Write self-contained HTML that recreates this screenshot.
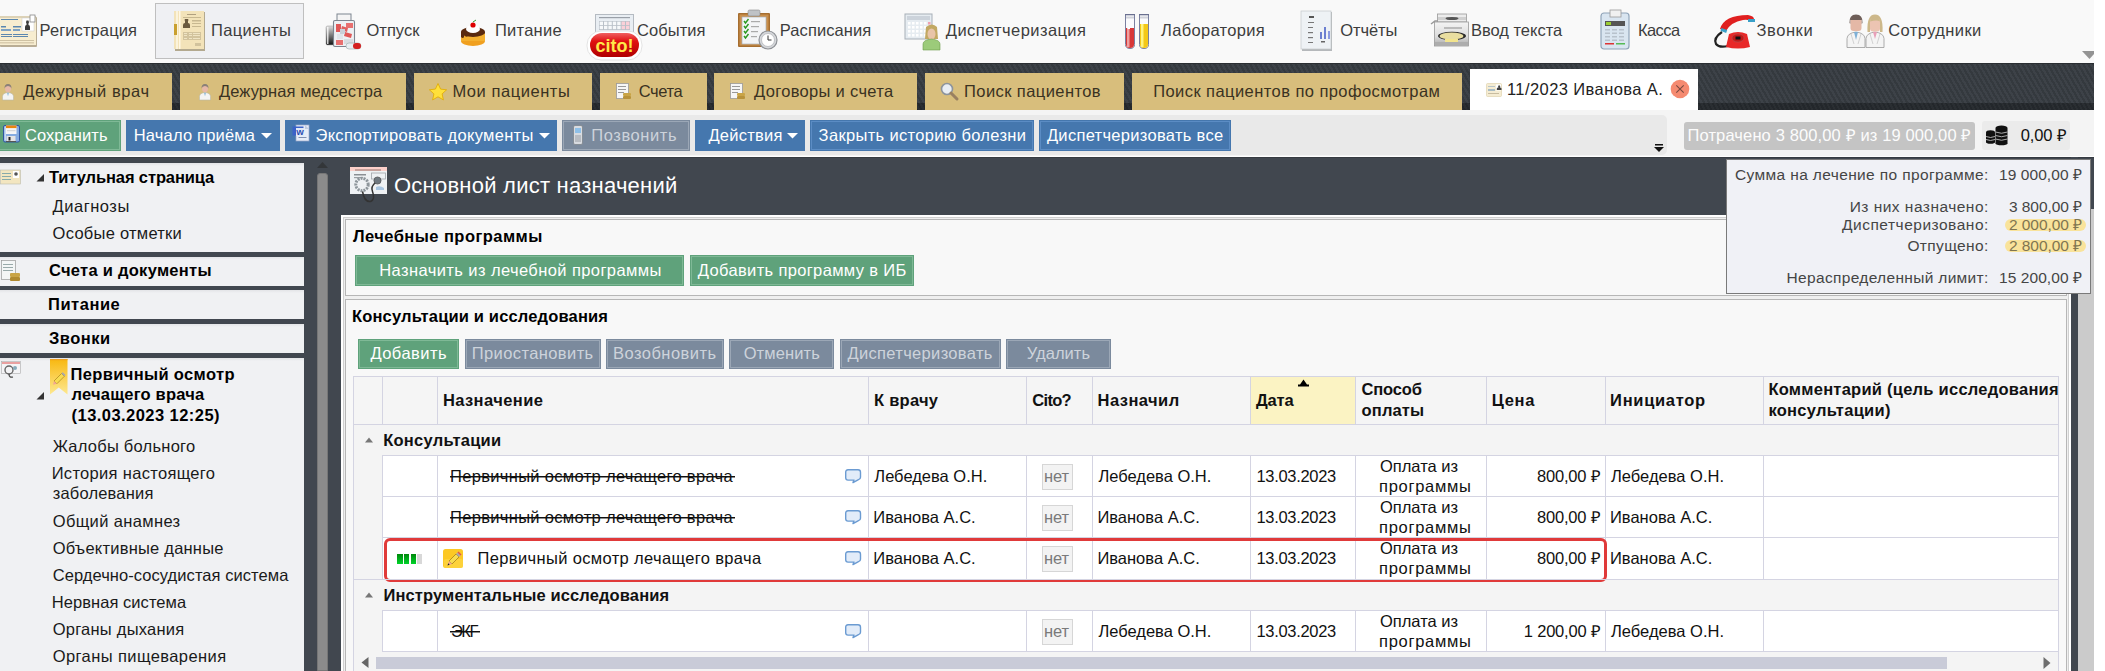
<!DOCTYPE html><html><head><meta charset="utf-8"><style>
*{box-sizing:border-box;margin:0;padding:0}
html,body{width:2105px;height:671px;overflow:hidden;background:#fff;font-family:"Liberation Sans",sans-serif;}
.ab{position:absolute;white-space:nowrap}
.t{position:absolute;white-space:nowrap;line-height:1}
svg.ab{overflow:visible}
</style></head><body>

<div class="ab" style="left:0px;top:0px;width:2094px;height:63px;background:#f9f9f9"></div>
<div class="ab" style="left:155px;top:3px;width:149px;height:56px;background:#eff0f3;border:1px solid #bfbfbf"></div>
<div class="t" style="left:39.50px;top:22.03px;font-size:16.5px;color:#3d3d3d;letter-spacing:0.098px;">Регистрация</div>
<div class="t" style="left:211.00px;top:22.03px;font-size:16.5px;color:#3d3d3d;letter-spacing:0.350px;">Пациенты</div>
<div class="t" style="left:366.40px;top:22.03px;font-size:16.5px;color:#3d3d3d;letter-spacing:0.052px;">Отпуск</div>
<div class="t" style="left:495.00px;top:22.03px;font-size:16.5px;color:#3d3d3d;letter-spacing:0.241px;">Питание</div>
<div class="t" style="left:637.00px;top:22.03px;font-size:16.5px;color:#3d3d3d;letter-spacing:0.071px;">События</div>
<div class="t" style="left:779.80px;top:22.03px;font-size:16.5px;color:#3d3d3d;letter-spacing:0.068px;">Расписания</div>
<div class="t" style="left:945.80px;top:22.03px;font-size:16.5px;color:#3d3d3d;letter-spacing:0.419px;">Диспетчеризация</div>
<div class="t" style="left:1161.00px;top:22.03px;font-size:16.5px;color:#3d3d3d;letter-spacing:0.324px;">Лаборатория</div>
<div class="t" style="left:1340.30px;top:22.03px;font-size:16.5px;color:#3d3d3d;letter-spacing:-0.104px;">Отчёты</div>
<div class="t" style="left:1471.00px;top:22.03px;font-size:16.5px;color:#3d3d3d;letter-spacing:-0.019px;">Ввод текста</div>
<div class="t" style="left:1637.90px;top:22.03px;font-size:16.5px;color:#3d3d3d;letter-spacing:-0.547px;">Касса</div>
<div class="t" style="left:1756.60px;top:22.03px;font-size:16.5px;color:#3d3d3d;letter-spacing:0.549px;">Звонки</div>
<div class="t" style="left:1888.30px;top:22.03px;font-size:16.5px;color:#3d3d3d;letter-spacing:0.394px;">Сотрудники</div>
<svg class="ab" style="left:0px;top:15px" width="37" height="33" viewBox="0 0 37 33"><rect x="0" y="2" width="37" height="30" rx="1" fill="#b9ad95"/>
<rect x="0" y="1" width="36" height="29" fill="#f7edd0"/>
<rect x="0" y="1" width="36" height="2" fill="#ddd2b6"/>
<rect x="1" y="4" width="17" height="1" fill="#5b87b0"/>
<rect x="1" y="11" width="5" height="1.5" fill="#5b87b0"/><rect x="13" y="11" width="8" height="1.5" fill="#5b87b0"/>
<rect x="1" y="14" width="10" height="2" fill="#7ea2c4"/><rect x="13" y="14" width="7" height="2" fill="#7ea2c4"/>
<rect x="1" y="19" width="11" height="1" fill="#5b87b0"/><rect x="13" y="19" width="15" height="1" fill="#5b87b0"/>
<rect x="1" y="21" width="11" height="1" fill="#5b87b0"/><rect x="13" y="21" width="15" height="1" fill="#5b87b0"/>
<rect x="0" y="25" width="34" height="1" fill="#cfc2a3"/><rect x="0" y="27" width="34" height="1.5" fill="#d9ccae"/>
<rect x="22" y="3" width="12" height="13" fill="#fff" stroke="#ccc" stroke-width="0.5"/>
<path d="M25 15 v-3 q0-2 1.5-2 v-1.5 q-1-1 0-3 h2 q1 2 0 3 v1.5 q1.5 0 1.5 2 v3z" fill="#3b3b3b"/>
<rect x="30" y="0" width="5" height="7" fill="#fff" stroke="#888" stroke-width="0.8"/></svg>
<svg class="ab" style="left:174px;top:11px" width="31" height="40" viewBox="0 0 31 40"><rect x="1" y="1" width="30" height="39" fill="#b3a98f"/>
<rect x="0" y="0" width="30" height="38" fill="#f3e3b9"/>
<rect x="2" y="0" width="2" height="38" fill="#fbf3dc"/><rect x="5" y="0" width="1.5" height="38" fill="#fff7e3"/>
<rect x="0" y="13" width="3" height="11" fill="#c9a030"/>
<rect x="13" y="3" width="9" height="1" fill="#b0a080"/>
<rect x="9" y="6" width="18" height="1" fill="#c8b890"/>
<path d="M9 17 v-3 q0-2 2-2 v-2 q-1-1 0-2 h3 q1 1 0 2 v2 q2 0 2 2 v3z" fill="#6b5a3e"/>
<rect x="18" y="9" width="9" height="1.5" fill="#c8b890"/><rect x="18" y="12" width="9" height="1" fill="#c8b890"/><rect x="18" y="15" width="9" height="1" fill="#c8b890"/>
<rect x="9" y="21" width="18" height="8" fill="#d2c39d"/>
<rect x="10" y="22" width="3" height="1" fill="#efe4c4"/><rect x="15" y="22" width="3" height="1" fill="#efe4c4"/><rect x="19" y="22" width="7" height="1" fill="#efe4c4"/>
<rect x="10" y="24" width="3" height="1" fill="#efe4c4"/><rect x="15" y="24" width="3" height="1" fill="#efe4c4"/><rect x="19" y="24" width="7" height="1" fill="#efe4c4"/>
<rect x="10" y="27" width="3" height="1" fill="#efe4c4"/><rect x="15" y="27" width="3" height="1" fill="#efe4c4"/><rect x="19" y="27" width="7" height="1" fill="#efe4c4"/>
<rect x="21" y="32" width="6" height="3" fill="#d2c39d"/></svg>
<svg class="ab" style="left:325px;top:14px" width="37" height="37" viewBox="0 0 37 37"><defs><linearGradient id="can" x1="0" x2="0" y1="0" y2="1"><stop offset="0" stop-color="#ddd"/><stop offset="1" stop-color="#111"/></linearGradient></defs>
<rect x="12" y="0" width="14" height="6.5" fill="#f4f4f4" stroke="#7d8590" stroke-width="1"/>
<rect x="1" y="12" width="8" height="19" rx="1.5" fill="url(#can)" stroke="#aaa" stroke-width="0.6"/>
<rect x="2" y="13" width="1.5" height="17" fill="#fff" opacity="0.8"/>
<rect x="8.5" y="6.5" width="21" height="26" rx="1.5" fill="#eef0f3" stroke="#7d8590" stroke-width="1.1"/>
<path d="M11 10 h5 v8 h-5z" fill="#e05858"/><path d="M17 12 l6 2 -1 4 -6 -2z" fill="#e06060"/>
<path d="M21 9 h7 v5 h-7z" fill="#e87070"/><path d="M12 20 h6 v5 h-6z" fill="#dfe5ea"/>
<path d="M20 18 l7 2 -1 4 -7 -2z" fill="#e05858"/><path d="M11 26 h7 v5 h-7z" fill="#e87070"/>
<path d="M19 25 h9 v5 h-9z" fill="#d9dde2"/><path d="M15 15 h5 v5 h-5z" fill="#c9d0d8"/>
<rect x="21" y="29" width="15" height="6" rx="3" fill="#e8eef2" stroke="#9aa" stroke-width="0.6"/>
<rect x="28" y="29" width="8" height="6" rx="3" fill="#d42020"/></svg>
<svg class="ab" style="left:460px;top:20px" width="26" height="27" viewBox="0 0 26 27"><ellipse cx="13" cy="21" rx="12" ry="5" fill="#f0a020"/>
<rect x="1" y="12" width="24" height="9" fill="#f4b030"/>
<ellipse cx="13" cy="12" rx="12" ry="5" fill="#5a2a10"/>
<path d="M1 12 v5 q2 2 3 0 v-2 q2 3 4 1 v-3 q3 4 5 1 q2 2 4 0 q2 3 4 -1 q2 2 4 0 v-1z" fill="#5a2a10"/>
<ellipse cx="13" cy="9" rx="7" ry="4" fill="#fff"/>
<circle cx="13" cy="5" r="2.6" fill="#d00"/><path d="M13 2 l3 -2" stroke="#393" stroke-width="1"/></svg>
<svg class="ab" style="left:587px;top:14px" width="56" height="47" viewBox="0 0 56 47"><rect x="8.5" y="0.5" width="38" height="19" fill="#e9eef3" stroke="#b5bbc2" stroke-width="1"/>
<rect x="12" y="3" width="31" height="1.2" fill="#9aa0a8"/>
<rect x="12" y="7" width="31" height="9" fill="#b9c0c8"/>
<rect x="12.6" y="7.6" width="3.4" height="3.4" fill="#f6f8fa"/><rect x="12.6" y="11.8" width="3.4" height="3.4" fill="#f6f8fa"/><rect x="17.0" y="7.6" width="3.4" height="3.4" fill="#f6f8fa"/><rect x="17.0" y="11.8" width="3.4" height="3.4" fill="#f6f8fa"/><rect x="21.4" y="7.6" width="3.4" height="3.4" fill="#f6f8fa"/><rect x="21.4" y="11.8" width="3.4" height="3.4" fill="#f6f8fa"/><rect x="25.8" y="7.6" width="3.4" height="3.4" fill="#f6f8fa"/><rect x="25.8" y="11.8" width="3.4" height="3.4" fill="#f6f8fa"/><rect x="30.200000000000003" y="7.6" width="3.4" height="3.4" fill="#f6f8fa"/><rect x="30.200000000000003" y="11.8" width="3.4" height="3.4" fill="#f6f8fa"/><rect x="34.6" y="7.6" width="3.4" height="3.4" fill="#fbd0d8"/><rect x="34.6" y="11.8" width="3.4" height="3.4" fill="#fbd0d8"/><rect x="39.0" y="7.6" width="3.4" height="3.4" fill="#fbd0d8"/><rect x="39.0" y="11.8" width="3.4" height="3.4" fill="#fbd0d8"/>
<rect x="0" y="17" width="55" height="29" rx="14" fill="#fff" stroke="#ddd" stroke-width="0.8"/>
<defs><linearGradient id="citog" x1="0" x2="0" y1="0" y2="1"><stop offset="0" stop-color="#f06060"/><stop offset="0.35" stop-color="#e01010"/><stop offset="1" stop-color="#b00000"/></linearGradient></defs>
<rect x="3" y="19" width="49" height="24" rx="12" fill="url(#citog)"/>
<text x="27.5" y="38" text-anchor="middle" font-family="Liberation Sans" font-weight="bold" font-size="18" fill="#ffe84a">cito!</text></svg>
<svg class="ab" style="left:738px;top:10px" width="40" height="40" viewBox="0 0 40 40"><rect x="0" y="3" width="32" height="34" rx="1" fill="#a66e30"/>
<rect x="1.5" y="4.5" width="29" height="31" fill="#c98f4c"/>
<rect x="4" y="7" width="24" height="27" fill="#f3f4f6" stroke="#a9b2bb" stroke-width="0.7"/>
<rect x="10" y="0" width="12" height="6" rx="1.5" fill="#bfc2c6" stroke="#888" stroke-width="0.6"/>
<path d="M6 11 l1.5 2 3 -4" stroke="#2a9a20" stroke-width="1.4" fill="none"/><rect x="13" y="11" width="9" height="1.2" fill="#aaa"/><path d="M6 16 l1.5 2 3 -4" stroke="#2a9a20" stroke-width="1.4" fill="none"/><rect x="13" y="16" width="8" height="1.2" fill="#aaa"/><path d="M6 21 l1.5 2 3 -4" stroke="#2a9a20" stroke-width="1.4" fill="none"/><rect x="13" y="21" width="7" height="1.2" fill="#aaa"/><path d="M6 26 l1.5 2 3 -4" stroke="#2a9a20" stroke-width="1.4" fill="none"/><rect x="13" y="26" width="6" height="1.2" fill="#aaa"/>
<circle cx="30" cy="30" r="9" fill="#d5d7da" stroke="#8e9196" stroke-width="1.2"/>
<circle cx="30" cy="30" r="6.5" fill="#fff" stroke="#b5b8bc" stroke-width="0.8"/>
<path d="M30 25.5 v4.5 h3.5" stroke="#333" stroke-width="1" fill="none"/></svg>
<svg class="ab" style="left:905px;top:14px" width="38" height="37" viewBox="0 0 38 37"><rect x="0" y="0" width="27" height="25" fill="#e6ecf1" stroke="#a8b0b8" stroke-width="1"/>
<rect x="2" y="2" width="23" height="4" fill="#ccd3db"/>
<rect x="3" y="8" width="2.5" height="2.5" fill="#fff"/><rect x="3" y="12" width="2.5" height="2.5" fill="#fff"/><rect x="3" y="16" width="2.5" height="2.5" fill="#fff"/><rect x="3" y="20" width="2.5" height="2.5" fill="#fff"/><rect x="7" y="8" width="2.5" height="2.5" fill="#fff"/><rect x="7" y="12" width="2.5" height="2.5" fill="#fff"/><rect x="7" y="16" width="2.5" height="2.5" fill="#fff"/><rect x="7" y="20" width="2.5" height="2.5" fill="#fff"/><rect x="11" y="8" width="2.5" height="2.5" fill="#fff"/><rect x="11" y="12" width="2.5" height="2.5" fill="#fff"/><rect x="11" y="16" width="2.5" height="2.5" fill="#fff"/><rect x="11" y="20" width="2.5" height="2.5" fill="#fff"/><rect x="15" y="8" width="2.5" height="2.5" fill="#fff"/><rect x="15" y="12" width="2.5" height="2.5" fill="#fff"/><rect x="15" y="16" width="2.5" height="2.5" fill="#fff"/><rect x="15" y="20" width="2.5" height="2.5" fill="#fff"/><rect x="19" y="8" width="2.5" height="2.5" fill="#fff"/><rect x="19" y="12" width="2.5" height="2.5" fill="#fff"/><rect x="19" y="16" width="2.5" height="2.5" fill="#fff"/><rect x="19" y="20" width="2.5" height="2.5" fill="#fff"/><rect x="23" y="8" width="2.5" height="2.5" fill="#f0a0b0"/><rect x="23" y="12" width="2.5" height="2.5" fill="#f0a0b0"/><rect x="23" y="16" width="2.5" height="2.5" fill="#f0a0b0"/><rect x="23" y="20" width="2.5" height="2.5" fill="#f0a0b0"/>
<path d="M21 13 q6 -5 11 0 l1 12 h-13z" fill="#c2a862"/>
<ellipse cx="26.5" cy="20" rx="4" ry="5.5" fill="#e8c4a8"/>
<path d="M18 36 v-6 q0-4 8.5-5 q8.5 1 8.5 5 v6z" fill="#9ccb7a" stroke="#6c9a4a" stroke-width="0.6"/></svg>
<svg class="ab" style="left:1124px;top:14px" width="26" height="36" viewBox="0 0 26 36"><path d="M1.5 0.5 v30 q0 4 4.5 4 q4.5 0 4.5 -4 v-30" fill="#fbfbfd" stroke="#7a80a0" stroke-width="1"/>
<rect x="1" y="0" width="10" height="1.3" fill="#6a7090"/><rect x="2" y="2.5" width="8" height="2" fill="#d0d2da"/>
<path d="M2 14 h8 v16.5 q0 3.5 -4 3.5 q-4 0 -4 -3.5z" fill="#d83838"/><rect x="3" y="14" width="2.5" height="19" fill="#f0a0a0"/><rect x="3.5" y="13.5" width="2.5" height="1.5" fill="#fff"/>
<path d="M15.5 0.5 v30 q0 4 4.5 4 q4.5 0 4.5 -4 v-30" fill="#fbfbfd" stroke="#7a80a0" stroke-width="1"/>
<rect x="15" y="0" width="10" height="1.3" fill="#6a7090"/><rect x="16" y="2.5" width="8" height="2" fill="#d0d2da"/>
<path d="M16 10 h8 v20.5 q0 3.5 -4 3.5 q-4 0 -4 -3.5z" fill="#f4c818"/><rect x="17" y="10" width="2.5" height="23" fill="#fff480"/></svg>
<svg class="ab" style="left:1301px;top:11px" width="31" height="40" viewBox="0 0 31 40"><rect x="1" y="1" width="30" height="39" fill="#b5b8bb"/>
<rect x="0" y="0" width="30" height="38" fill="#eef2f5" stroke="#c4c8cc" stroke-width="0.7"/>
<rect x="8" y="5" width="5" height="2" fill="#555"/>
<rect x="7" y="11" width="6" height="1" fill="#777"/><rect x="7" y="16" width="5" height="1" fill="#777"/>
<rect x="7" y="21" width="5" height="1.2" fill="#777"/><rect x="7" y="26" width="5" height="1.2" fill="#777"/><rect x="7" y="31" width="5" height="1" fill="#777"/>
<rect x="19" y="21" width="2" height="7" fill="#6b7fd0"/><rect x="23" y="16" width="2" height="12" fill="#6b7fd0"/><rect x="27" y="20" width="2" height="8" fill="#8b9be0"/>
<rect x="20" y="30" width="4" height="1.5" fill="#666"/></svg>
<svg class="ab" style="left:1430px;top:13px" width="41" height="34" viewBox="0 0 41 34"><defs><linearGradient id="twb" x1="0" x2="0" y1="0" y2="1"><stop offset="0" stop-color="#f4f4f4"/><stop offset="0.6" stop-color="#dcdcdc"/><stop offset="1" stop-color="#a8a8a8"/></linearGradient></defs>
<rect x="7.5" y="1" width="29" height="8" fill="#ececec" stroke="#9a9a9a" stroke-width="0.8"/>
<rect x="8" y="4" width="28" height="3" fill="#d0d0d0"/>
<ellipse cx="22" cy="5.5" rx="6.5" ry="1.6" fill="#555"/>
<path d="M1 11 l4 -3 h3" stroke="#999" stroke-width="1.5" fill="none"/>
<rect x="4.5" y="9" width="34" height="24" fill="url(#twb)" stroke="#9a9a9a" stroke-width="0.8"/>
<rect x="14" y="14" width="18" height="2" fill="#bbb"/>
<ellipse cx="22" cy="23" rx="14" ry="4.2" fill="#2a2a2a"/>
<ellipse cx="21.5" cy="23" rx="12" ry="3.6" fill="#e9dea0"/>
<rect x="15" y="26" width="13" height="3" fill="#f2e48e"/>
<rect x="5" y="29" width="33" height="4" fill="#adadad"/></svg>
<svg class="ab" style="left:1601px;top:10px" width="29" height="40" viewBox="0 0 29 40"><rect x="0" y="3" width="28" height="36" rx="3" fill="#d9e5f0" stroke="#8fa3b8" stroke-width="1.2"/>
<rect x="9" y="0" width="11" height="7" fill="#f0f0f0" stroke="#999" stroke-width="0.8"/>
<rect x="4" y="11" width="20" height="5" fill="#555"/><rect x="5" y="12" width="5" height="3" fill="#9acd32"/>
<rect x="4" y="19.0" width="5" height="1.5" fill="#b8c2cc"/><rect x="4" y="22.5" width="5" height="1.5" fill="#b8c2cc"/><rect x="4" y="26.0" width="5" height="1.5" fill="#b8c2cc"/><rect x="4" y="29.5" width="5" height="1.5" fill="#b8c2cc"/><rect x="11" y="19.0" width="5" height="1.5" fill="#b8c2cc"/><rect x="11" y="22.5" width="5" height="1.5" fill="#b8c2cc"/><rect x="11" y="26.0" width="5" height="1.5" fill="#b8c2cc"/><rect x="11" y="29.5" width="5" height="1.5" fill="#b8c2cc"/><rect x="18" y="19.0" width="5" height="1.5" fill="#b8c2cc"/><rect x="18" y="22.5" width="5" height="1.5" fill="#b8c2cc"/><rect x="18" y="26.0" width="5" height="1.5" fill="#b8c2cc"/><rect x="18" y="29.5" width="5" height="1.5" fill="#b8c2cc"/>
<rect x="4" y="33" width="9" height="1.5" fill="#d33"/><rect x="15" y="33" width="9" height="1.5" fill="#5b5"/></svg>
<svg class="ab" style="left:1714px;top:14px" width="42" height="34" viewBox="0 0 42 34"><path d="M8 18 q-9 6 -6 12 q3 4 12 2" stroke="#222" stroke-width="2.2" fill="none"/>
<path d="M6 15 q4 -14 28 -14 q6 1 6 4 l-1 3 q-4 -3 -10 -2 q-12 2 -17 11z" fill="#e02020"/>
<rect x="34" y="5" width="7" height="3" fill="#3aa0c8"/><rect x="7" y="15" width="6" height="3" fill="#3aa0c8" transform="rotate(20 10 16)"/>
<path d="M12 33 l3 -13 q9 -4 18 0 l3 13 q-12 3 -24 0z" fill="#e82828"/>
<ellipse cx="24" cy="24" rx="6" ry="4" fill="#c21818" stroke="#a55" stroke-width="0.6"/>
<rect x="21.5" y="22.5" width="5" height="3" fill="#111"/></svg>
<svg class="ab" style="left:1846px;top:14px" width="39" height="34" viewBox="0 0 39 34"><path d="M1 33.5 v-9 q0.5 -5.5 9 -6.5 q8.5 1 9 6.5 v9z" fill="#f4f4f4" stroke="#9a9a9a" stroke-width="0.8"/>
<path d="M8 18 l2 8 l2 -8z" fill="#7fb0d6"/><path d="M5 20 l3 10 M15 20 l-3 10" stroke="#c8c8c8" stroke-width="0.8"/>
<path d="M3.5 9 q-0.5 -8.5 6.5 -8.5 q7 0 6.5 8.5 l-1 1 v-4 h-11 v4z" fill="#6e5e58"/>
<rect x="4.5" y="4" width="11" height="13" rx="3" fill="#e4b8a6"/><path d="M4.5 6 q0 -3 5.5 -3 q5.5 0 5.5 3 h-11z" fill="#6e5e58"/>
<path d="M20 33.5 v-9 q0.5 -5.5 9 -6.5 q8.5 1 9 6.5 v9z" fill="#f4f4f4" stroke="#9a9a9a" stroke-width="0.8"/>
<path d="M27 18 l2 7 l2 -7z" fill="#e8a0b8"/><path d="M24 20 l3 10 M34 20 l-3 10" stroke="#c8c8c8" stroke-width="0.8"/>
<path d="M21.5 18 q-1 -17.5 7.5 -17.5 q8.5 0 7.5 17.5 h-2.5 v-12 h-10 v12z" fill="#cdb88a"/>
<rect x="24" y="4.5" width="10" height="13" rx="3" fill="#ecc4b2"/><path d="M24 7.5 q0 -4 5 -4 q5 0 5 4 q-3 -2 -10 0z" fill="#cdb88a"/></svg>
<svg class="ab" style="left:2082px;top:51px" width="12" height="8"><path d="M0 0 h12 v3 l-4.5 5z" fill="#949494"/></svg>
<div class="ab" style="left:0px;top:63px;width:2094px;height:47px;background:repeating-linear-gradient(60deg,#34393e 0 2.2px,#3d4248 2.2px 4.4px)"></div>
<div class="ab" style="left:0px;top:63px;width:2094px;height:1px;background:#2a2e32"></div>
<div class="ab" style="left:0px;top:103px;width:2094px;height:7px;background:repeating-linear-gradient(63deg,#23272b 0 2px,#2a2e32 2px 4px)"></div>
<div class="ab" style="left:0px;top:73px;width:172px;height:37px;background:#d8be7c"></div>
<div class="t" style="left:23.30px;top:82.73px;font-size:16.5px;color:#3a3222;letter-spacing:0.587px;">Дежурный врач</div>
<div class="ab" style="left:180px;top:73px;width:226px;height:37px;background:#d8be7c"></div>
<div class="t" style="left:219.00px;top:82.73px;font-size:16.5px;color:#3a3222;letter-spacing:0.080px;">Дежурная медсестра</div>
<div class="ab" style="left:414px;top:73px;width:178px;height:37px;background:#d8be7c"></div>
<div class="t" style="left:452.40px;top:82.73px;font-size:16.5px;color:#3a3222;letter-spacing:0.543px;">Мои пациенты</div>
<div class="ab" style="left:600px;top:73px;width:107px;height:37px;background:#d8be7c"></div>
<div class="t" style="left:638.80px;top:82.73px;font-size:16.5px;color:#3a3222;letter-spacing:-0.407px;">Счета</div>
<div class="ab" style="left:714px;top:73px;width:203px;height:37px;background:#d8be7c"></div>
<div class="t" style="left:754.00px;top:82.73px;font-size:16.5px;color:#3a3222;letter-spacing:0.319px;">Договоры и счета</div>
<div class="ab" style="left:925px;top:73px;width:199px;height:37px;background:#d8be7c"></div>
<div class="t" style="left:964.00px;top:82.73px;font-size:16.5px;color:#3a3222;letter-spacing:0.420px;">Поиск пациентов</div>
<div class="ab" style="left:1132px;top:73px;width:330px;height:37px;background:#d8be7c"></div>
<div class="t" style="left:1153.20px;top:82.73px;font-size:16.5px;color:#3a3222;letter-spacing:0.433px;">Поиск пациентов по профосмотрам</div>
<svg class="ab" style="left:0px;top:83px" width="16" height="18" viewBox="0 0 16 18"><path d="M2.5 17 v-3.5 q0 -3.5 5.5 -4 q5.5 0.5 5.5 4 v3.5z" fill="#f4f4f4" stroke="#b8b8a8" stroke-width="0.6"/>
<path d="M7 9.8 l1 3.5 l1 -3.5z" fill="#8ab8d8"/>
<ellipse cx="8" cy="5.6" rx="3" ry="3.6" fill="#e6b8a8"/><path d="M4.6 5.5 q-0.4 -4.5 3.4 -4.5 q3.8 0 3.4 4.5 q-0.5 -2.5 -3.4 -2.5 q-2.9 0 -3.4 2.5z" fill="#8a8078"/></svg>
<svg class="ab" style="left:197px;top:83px" width="16" height="18" viewBox="0 0 16 18"><path d="M2.5 17 v-3.5 q0 -3.5 5.5 -4 q5.5 0.5 5.5 4 v3.5z" fill="#f4f4f4" stroke="#b8b8a8" stroke-width="0.6"/>
<path d="M7 9.8 l1 3.5 l1 -3.5z" fill="#8ab8d8"/>
<ellipse cx="8" cy="5.6" rx="3" ry="3.6" fill="#e6b8a8"/><path d="M4.6 5.5 q-0.4 -4.5 3.4 -4.5 q3.8 0 3.4 4.5 q-0.5 -2.5 -3.4 -2.5 q-2.9 0 -3.4 2.5z" fill="#8a8078"/></svg>
<svg class="ab" style="left:429px;top:83px" width="18" height="18" viewBox="0 0 18 18"><path d="M9 0.5 l2.6 5.6 6 .7 -4.5 4.1 1.3 6 -5.4 -3.1 -5.4 3.1 1.3 -6 -4.5 -4.1 6 -.7z" fill="#ffe03a" stroke="#e0a800" stroke-width="0.8"/></svg>
<svg class="ab" style="left:616px;top:83px" width="16" height="17" viewBox="0 0 16 17"><rect x="0.5" y="0.5" width="12" height="15" fill="#f6f6f6" stroke="#9a9a9a" stroke-width="0.8"/>
<rect x="2" y="3" width="8" height="1" fill="#999"/><rect x="2" y="6" width="8" height="1" fill="#999"/><rect x="2" y="9" width="6" height="1" fill="#999"/>
<rect x="7" y="10" width="8" height="3" rx="1" fill="#c9a446"/><rect x="7" y="13" width="8" height="3" rx="1" fill="#b8923a"/></svg>
<svg class="ab" style="left:730px;top:83px" width="16" height="17" viewBox="0 0 16 17"><rect x="0.5" y="0.5" width="12" height="15" fill="#f6f6f6" stroke="#9a9a9a" stroke-width="0.8"/>
<rect x="2" y="3" width="8" height="1" fill="#999"/><rect x="2" y="6" width="8" height="1" fill="#999"/><rect x="2" y="9" width="6" height="1" fill="#999"/>
<rect x="7" y="10" width="8" height="3" rx="1" fill="#c9a446"/><rect x="7" y="13" width="8" height="3" rx="1" fill="#b8923a"/></svg>
<svg class="ab" style="left:940px;top:82px" width="19" height="19" viewBox="0 0 19 19"><circle cx="7" cy="7" r="5.5" fill="#e9eef4" stroke="#8d949c" stroke-width="1.6"/>
<path d="M11 11 l6 6" stroke="#9a8060" stroke-width="3" stroke-linecap="round"/></svg>
<div class="ab" style="left:1470px;top:69px;width:228px;height:41px;background:#fff"></div>
<svg class="ab" style="left:1486px;top:83px" width="16" height="14" viewBox="0 0 16 14"><rect x="0.5" y="0.5" width="15" height="13" rx="1" fill="#f5ecd2" stroke="#e0d4b0" stroke-width="0.7"/>
<rect x="2" y="3" width="7" height="1" fill="#b8c4c8"/><rect x="2" y="6" width="7" height="2" fill="#a8bcc4"/><rect x="2" y="10" width="11" height="1" fill="#c8bca0"/>
<rect x="10" y="1.5" width="5" height="6" fill="#fff"/><path d="M10.8 7 v-1.5 q0-1 1.7-1 q-1-0.5 0-2 q1 -0.5 1.6 0.5 q0.5 1 -0.3 1.5 q1.7 0 1.7 1 v1.5z" fill="#444"/></svg>
<div class="t" style="left:1507.00px;top:80.83px;font-size:16.5px;color:#222;letter-spacing:0.414px;">11/2023 Иванова А.</div>
<svg class="ab" style="left:1670px;top:79px" width="20" height="20"><circle cx="10" cy="10" r="9.3" fill="#f58a70"/><path d="M6.3 6.3 l7.4 7.4 M13.7 6.3 l-7.4 7.4" stroke="#7a4a40" stroke-width="1.1"/></svg>
<div class="ab" style="left:0px;top:110px;width:2094px;height:47px;background:#f4f4f4"></div>
<div class="ab" style="left:0px;top:115px;width:1667px;height:40px;background:#e9e9e9;border-radius:0 5px 5px 0"></div>
<div class="ab" style="left:-3px;top:120px;width:124px;height:31px;background:#5fa27b;box-shadow:inset 0 0 0 1px #5fa27b,inset 0 0 0 2px #7fb996"></div>
<div class="t" style="left:25.00px;top:127.23px;font-size:16.5px;color:#fff;letter-spacing:0.063px;">Сохранить</div>
<div class="ab" style="left:126px;top:120px;width:154px;height:31px;background:#4577ae"></div>
<div class="t" style="left:133.70px;top:127.23px;font-size:16.5px;color:#fff;letter-spacing:0.181px;">Начало приёма</div>
<div class="ab" style="left:285px;top:120px;width:272px;height:31px;background:#4577ae"></div>
<div class="t" style="left:315.50px;top:127.23px;font-size:16.5px;color:#fff;letter-spacing:0.293px;">Экспортировать документы</div>
<div class="ab" style="left:562px;top:120px;width:128px;height:31px;background:#7b8a9d;box-shadow:inset 0 0 0 1px #7b8a9d,inset 0 0 0 2px #9ba7b6"></div>
<div class="t" style="left:591.30px;top:127.23px;font-size:16.5px;color:#cdd3db;letter-spacing:0.580px;">Позвонить</div>
<div class="ab" style="left:695px;top:120px;width:110px;height:31px;background:#4577ae"></div>
<div class="t" style="left:708.40px;top:127.23px;font-size:16.5px;color:#fff;letter-spacing:0.249px;">Действия</div>
<div class="ab" style="left:810px;top:120px;width:224px;height:31px;background:#4577ae;box-shadow:inset 0 0 0 1px #4577ae,inset 0 0 0 2px #5b8cc4"></div>
<div class="t" style="left:818.60px;top:127.23px;font-size:16.5px;color:#fff;letter-spacing:0.332px;">Закрыть историю болезни</div>
<div class="ab" style="left:1039px;top:120px;width:192px;height:31px;background:#4577ae;box-shadow:inset 0 0 0 1px #4577ae,inset 0 0 0 2px #5b8cc4"></div>
<div class="t" style="left:1046.90px;top:127.23px;font-size:16.5px;color:#fff;letter-spacing:0.298px;">Диспетчеризовать все</div>
<svg class="ab" style="left:260.8px;top:133px" width="11" height="6"><path d="M0 0 h11 l-5.5 5.5z" fill="#fff"/></svg>
<svg class="ab" style="left:539.4px;top:133px" width="11" height="6"><path d="M0 0 h11 l-5.5 5.5z" fill="#fff"/></svg>
<svg class="ab" style="left:787px;top:133px" width="11" height="6"><path d="M0 0 h11 l-5.5 5.5z" fill="#fff"/></svg>
<svg class="ab" style="left:3px;top:125px" width="17" height="18" viewBox="0 0 17 18"><rect x="0.5" y="0.5" width="16" height="16.5" rx="1.5" fill="#86ace0" stroke="#2f56a0" stroke-width="1"/>
<rect x="1.5" y="1.5" width="1.5" height="14" fill="#c8daf2"/>
<rect x="3" y="0.5" width="10.5" height="8.5" fill="#f6f6f6"/><rect x="3" y="0.5" width="10.5" height="2.6" fill="#e8860f"/>
<rect x="4" y="5" width="8.5" height="1.2" fill="#d8d8d8"/>
<rect x="3.5" y="11" width="9" height="6" fill="#e4e4e4"/><rect x="5.5" y="12" width="2" height="3.5" fill="#222"/>
<rect x="3" y="16" width="10" height="1" fill="#555"/></svg>
<svg class="ab" style="left:292px;top:124px" width="18" height="18" viewBox="0 0 18 18"><rect x="4" y="1" width="13" height="16" fill="#e6ecf8" stroke="#9aa8c8" stroke-width="0.7"/>
<path d="M13 1 l4 4 h-4z" fill="#c0cce0"/>
<rect x="6.5" y="13" width="8" height="1" fill="#8090b0"/>
<rect x="0.5" y="2.5" width="11" height="9" fill="#3a62c8"/>
<rect x="4" y="4" width="8" height="8" fill="#dfe8f6"/>
<text x="8" y="11" text-anchor="middle" font-family="Liberation Sans" font-weight="bold" font-size="8" fill="#2848b0">W</text></svg>
<svg class="ab" style="left:573px;top:125px" width="10" height="20" viewBox="0 0 10 20"><rect x="0.5" y="0.5" width="9" height="19" rx="1.5" fill="#d8dbe0" stroke="#7d848c" stroke-width="0.8"/>
<rect x="2" y="3" width="6" height="5" fill="#8fc0e8"/>
<rect x="2" y="10" width="6" height="7" fill="#b8bcc2"/></svg>
<svg class="ab" style="left:1654px;top:144px" width="10" height="9"><rect x="1" y="0" width="8" height="1.5" fill="#111"/><path d="M0 3 h10 l-5 5z" fill="#111"/></svg>
<div class="ab" style="left:1684px;top:122px;width:291px;height:28px;background:#c4c4c4;border-radius:3px"></div>
<div class="t" style="left:1687.50px;top:126.53px;font-size:16.5px;color:#fcfcfc;letter-spacing:0.126px;">Потрачено 3 800,00 ₽ из 19 000,00 ₽</div>
<div class="ab" style="left:1982px;top:121px;width:88px;height:29px;background:#ebebeb;border-radius:3px"></div>
<svg class="ab" style="left:1985px;top:125px" width="23" height="20"><g fill="#111"><rect x="1" y="7.5" width="9" height="10" rx="1"/><ellipse cx="5.5" cy="7.5" rx="4.5" ry="2.2"/><ellipse cx="5.5" cy="17" rx="4.5" ry="1.8"/><rect x="10.5" y="3" width="12" height="16" rx="1"/><ellipse cx="16.5" cy="3" rx="6" ry="2.6"/><ellipse cx="16.5" cy="18.5" rx="6" ry="1.8"/></g><g stroke="#bbb" stroke-width="0.9" fill="none"><path d="M1 11.5 q4.5 2 9 0 M1 14.5 q4.5 2 9 0 M10.5 7 q6 2.5 12 0 M10.5 10.5 q6 2.5 12 0 M10.5 14 q6 2.5 12 0"/></g></svg>
<div class="t" style="left:2020.70px;top:126.53px;font-size:16.5px;color:#111;letter-spacing:-0.140px;">0,00 ₽</div>
<div class="ab" style="left:0px;top:157px;width:2094px;height:514px;background:#41474f"></div>
<div class="ab" style="left:0px;top:156px;width:2094px;height:1px;background:#fff"></div>
<div class="ab" style="left:0px;top:157px;width:2094px;height:1px;background:#363b41"></div>
<div class="ab" style="left:0px;top:163px;width:304px;height:89px;background:linear-gradient(#e3e4e7,#f0f1f3 3px)"></div>
<div class="ab" style="left:0px;top:257px;width:304px;height:29px;background:linear-gradient(#e3e4e7,#f0f1f3 3px)"></div>
<div class="ab" style="left:0px;top:290px;width:304px;height:29px;background:linear-gradient(#e3e4e7,#f0f1f3 3px)"></div>
<div class="ab" style="left:0px;top:324px;width:304px;height:29px;background:linear-gradient(#e3e4e7,#f0f1f3 3px)"></div>
<div class="ab" style="left:0px;top:358px;width:304px;height:313px;background:linear-gradient(#e3e4e7,#f0f1f3 3px)"></div>
<div class="t" style="left:49.00px;top:169.03px;font-size:16.5px;color:#000;font-weight:bold;letter-spacing:-0.117px;">Титульная страница</div>
<div class="t" style="left:49.00px;top:261.83px;font-size:16.5px;color:#000;font-weight:bold;letter-spacing:0.275px;">Счета и документы</div>
<div class="t" style="left:48.00px;top:295.73px;font-size:16.5px;color:#000;font-weight:bold;letter-spacing:0.538px;">Питание</div>
<div class="t" style="left:49.00px;top:329.53px;font-size:16.5px;color:#000;font-weight:bold;letter-spacing:0.487px;">Звонки</div>
<div class="t" style="left:70.60px;top:365.73px;font-size:16.5px;color:#000;font-weight:bold;letter-spacing:0.351px;">Первичный осмотр</div>
<div class="t" style="left:71.60px;top:386.03px;font-size:16.5px;color:#000;font-weight:bold;letter-spacing:0.202px;">лечащего врача</div>
<div class="t" style="left:71.60px;top:407.03px;font-size:16.5px;color:#000;font-weight:bold;letter-spacing:0.444px;">(13.03.2023 12:25)</div>
<div class="t" style="left:52.60px;top:197.73px;font-size:16.5px;color:#1a1a1a;letter-spacing:0.506px;">Диагнозы</div>
<div class="t" style="left:52.60px;top:224.63px;font-size:16.5px;color:#1a1a1a;letter-spacing:0.259px;">Особые отметки</div>
<div class="t" style="left:52.70px;top:437.53px;font-size:16.5px;color:#1a1a1a;letter-spacing:0.242px;">Жалобы больного</div>
<div class="t" style="left:51.70px;top:464.63px;font-size:16.5px;color:#1a1a1a;letter-spacing:0.311px;">История настоящего</div>
<div class="t" style="left:52.70px;top:484.63px;font-size:16.5px;color:#1a1a1a;letter-spacing:0.180px;">заболевания</div>
<div class="t" style="left:52.70px;top:512.63px;font-size:16.5px;color:#1a1a1a;letter-spacing:0.357px;">Общий анамнез</div>
<div class="t" style="left:52.70px;top:539.63px;font-size:16.5px;color:#1a1a1a;letter-spacing:0.224px;">Объективные данные</div>
<div class="t" style="left:52.70px;top:566.93px;font-size:16.5px;color:#1a1a1a;letter-spacing:0.063px;">Сердечно-сосудистая система</div>
<div class="t" style="left:51.70px;top:593.83px;font-size:16.5px;color:#1a1a1a;letter-spacing:0.061px;">Нервная система</div>
<div class="t" style="left:52.70px;top:621.03px;font-size:16.5px;color:#1a1a1a;letter-spacing:0.242px;">Органы дыхания</div>
<div class="t" style="left:52.70px;top:648.03px;font-size:16.5px;color:#1a1a1a;letter-spacing:0.408px;">Органы пищеварения</div>
<svg class="ab" style="left:36px;top:174px" width="9" height="8"><path d="M8 0 v7.5 h-7.5z" fill="#333"/></svg>
<svg class="ab" style="left:36px;top:392px" width="9" height="8"><path d="M8 0 v7.5 h-7.5z" fill="#333"/></svg>
<svg class="ab" style="left:0px;top:169px" width="21" height="16" viewBox="0 0 21 16"><rect x="0.5" y="1" width="20" height="14" fill="#f3e6c0" stroke="#bba" stroke-width="0.6"/><rect x="2" y="4" width="9" height="1" fill="#8aa"/><rect x="2" y="7" width="9" height="1" fill="#8aa"/><rect x="2" y="10" width="9" height="1" fill="#8aa"/><rect x="13" y="2" width="6" height="7" fill="#fff"/><circle cx="16" cy="5" r="1.8" fill="#555"/></svg>
<svg class="ab" style="left:1px;top:260px" width="20" height="22" viewBox="0 0 20 22"><rect x="0.5" y="0.5" width="14" height="19" fill="#f4f6f6" stroke="#999" stroke-width="0.7"/><rect x="2" y="4" width="10" height="1" fill="#9aa"/><rect x="2" y="7" width="10" height="1" fill="#9aa"/><rect x="2" y="10" width="10" height="1" fill="#9aa"/><rect x="9" y="13" width="10" height="4" rx="1" fill="#c9a446"/><rect x="9" y="17" width="10" height="4" rx="1" fill="#b08a30"/></svg>
<svg class="ab" style="left:1px;top:361px" width="20" height="18" viewBox="0 0 20 18"><rect x="0.5" y="0.5" width="19" height="12" fill="#f4f4f6" stroke="#aaa" stroke-width="0.6"/><rect x="1" y="1" width="18" height="2" fill="#e9a0a0"/><circle cx="8" cy="9" r="4" fill="none" stroke="#666" stroke-width="1.4"/><path d="M8 13 q0 4 4 3" stroke="#444" stroke-width="1.2" fill="none"/><circle cx="14" cy="7" r="2" fill="#8ab"/></svg>
<svg class="ab" style="left:50px;top:359px" width="18" height="36" viewBox="0 0 18 36"><defs><linearGradient id="bmk" x1="0" x2="0" y1="0" y2="1"><stop offset="0" stop-color="#f8b810"/><stop offset="1" stop-color="#fde890"/></linearGradient></defs><path d="M0 0 h17.5 v35.5 l-8.75 -7 l-8.75 7z" fill="url(#bmk)"/><rect x="0" y="0" width="17.5" height="1.2" fill="#f0a020"/><path d="M4 22 l7.5 -7.5 l2.8 2.8 l-7.5 7.5z" fill="#f8dc50" stroke="#9a7410" stroke-width="0.6"/><path d="M11.5 14.5 l1.3 -1.3 l2.8 2.8 l-1.3 1.3z" fill="#a8a8b0"/><path d="M4 22 l2.8 2.8 l-3.8 1z" fill="#f2a894"/></svg>
<div class="ab" style="left:317px;top:173px;width:11px;height:498px;background:#8b8b8b;border:1px solid #767676;border-radius:3px 3px 0 0"></div>
<svg class="ab" style="left:317px;top:162px" width="11" height="7"><path d="M0 6 l5.5 -6 l5.5 6z" fill="#333639"/></svg>
<svg class="ab" style="left:350px;top:167px" width="38" height="37" viewBox="0 0 38 37"><rect x="0" y="0" width="37" height="27" fill="#eef1f4"/><rect x="0" y="0" width="37" height="4" fill="#fcd0ca"/><rect x="5" y="2" width="26" height="2" fill="#c8a29c"/><rect x="4" y="7" width="12" height="1.5" fill="#8a8f94"/><rect x="4" y="10" width="9" height="1.2" fill="#9a9fa4"/><rect x="21.5" y="6" width="14" height="6" fill="none" stroke="#a0a5aa" stroke-width="0.8"/><path d="M26 20 q4 -2 8 1 v2 h-8z" fill="#a9c6e2"/><circle cx="12" cy="17.5" r="6.2" fill="none" stroke="#8d959b" stroke-width="3" stroke-dasharray="2 1"/><path d="M12.5 24.5 q2 11 8 10 q5 -2 2 -10 q-2 -5 3 -9" stroke="#333" stroke-width="1.5" fill="none"/><circle cx="27.5" cy="13.5" r="3.6" fill="#6f7880" stroke="#444" stroke-width="0.6"/></svg>
<div class="t" style="left:394.00px;top:174.88px;font-size:22px;color:#fff;letter-spacing:0.237px;">Основной лист назначений</div>
<div class="ab" style="left:341px;top:215px;width:1730px;height:470px;background:#efefef;border:2px solid #fff;box-shadow:inset 1px 1px 0 #d0d0d0,inset -1px 0 0 #d0d0d0"></div>
<div class="ab" style="left:345px;top:219px;width:1722px;height:77px;background:#f8f8f8;border:1px solid #b6b6b6"></div>
<div class="t" style="left:353.00px;top:228.03px;font-size:16.5px;color:#000;font-weight:bold;letter-spacing:0.450px;">Лечебные программы</div>
<div class="ab" style="left:355px;top:255px;width:329px;height:31px;background:#5fa27b;box-shadow:inset 0 0 0 1px #5fa27b,inset 0 0 0 2px #7fb996"></div>
<div class="t" style="left:379.30px;top:262.33px;font-size:16.5px;color:#fff;letter-spacing:0.405px;">Назначить из лечебной программы</div>
<div class="ab" style="left:690px;top:255px;width:224px;height:31px;background:#5fa27b;box-shadow:inset 0 0 0 1px #5fa27b,inset 0 0 0 2px #7fb996"></div>
<div class="t" style="left:697.80px;top:262.33px;font-size:16.5px;color:#fff;letter-spacing:0.346px;">Добавить программу в ИБ</div>
<div class="ab" style="left:345px;top:299px;width:1722px;height:380px;background:#f8f8f8;border:1px solid #b6b6b6"></div>
<div class="t" style="left:352.00px;top:307.73px;font-size:16.5px;color:#000;font-weight:bold;letter-spacing:0.161px;">Консультации и исследования</div>
<div class="ab" style="left:358px;top:339px;width:101px;height:30px;background:#5fa27b;box-shadow:inset 0 0 0 1px #5fa27b,inset 0 0 0 2px #7fb996"></div>
<div class="t" style="left:370.40px;top:344.93px;font-size:16.5px;color:#fff;letter-spacing:0.468px;">Добавить</div>
<div class="ab" style="left:465px;top:339px;width:136px;height:30px;background:#7b8a9d;box-shadow:inset 0 0 0 1px #7b8a9d,inset 0 0 0 2px #9ba7b6"></div>
<div class="t" style="left:471.80px;top:344.93px;font-size:16.5px;color:#cdd3db;letter-spacing:0.395px;">Приостановить</div>
<div class="ab" style="left:606px;top:339px;width:118px;height:30px;background:#7b8a9d;box-shadow:inset 0 0 0 1px #7b8a9d,inset 0 0 0 2px #9ba7b6"></div>
<div class="t" style="left:613.00px;top:344.93px;font-size:16.5px;color:#cdd3db;letter-spacing:0.467px;">Возобновить</div>
<div class="ab" style="left:729px;top:339px;width:105px;height:30px;background:#7b8a9d;box-shadow:inset 0 0 0 1px #7b8a9d,inset 0 0 0 2px #9ba7b6"></div>
<div class="t" style="left:743.70px;top:344.93px;font-size:16.5px;color:#cdd3db;letter-spacing:0.100px;">Отменить</div>
<div class="ab" style="left:840px;top:339px;width:161px;height:30px;background:#7b8a9d;box-shadow:inset 0 0 0 1px #7b8a9d,inset 0 0 0 2px #9ba7b6"></div>
<div class="t" style="left:847.40px;top:344.93px;font-size:16.5px;color:#cdd3db;letter-spacing:0.331px;">Диспетчеризовать</div>
<div class="ab" style="left:1006px;top:339px;width:105px;height:30px;background:#7b8a9d;box-shadow:inset 0 0 0 1px #7b8a9d,inset 0 0 0 2px #9ba7b6"></div>
<div class="t" style="left:1026.80px;top:344.93px;font-size:16.5px;color:#cdd3db;letter-spacing:0.034px;">Удалить</div>
<div class="ab" style="left:353px;top:376px;width:1706px;height:49px;background:#f5f5f5;border-top:1px solid #d4d4e2;border-bottom:1px solid #d4d4e2"></div>
<div class="ab" style="left:1251px;top:377px;width:104px;height:47px;background:#fbf3c3"></div>
<div class="ab" style="left:353px;top:376px;width:1px;height:49px;background:#d4d4e2"></div>
<div class="ab" style="left:382px;top:376px;width:1px;height:49px;background:#d4d4e2"></div>
<div class="ab" style="left:437px;top:376px;width:1px;height:49px;background:#d4d4e2"></div>
<div class="ab" style="left:868px;top:376px;width:1px;height:49px;background:#d4d4e2"></div>
<div class="ab" style="left:1026px;top:376px;width:1px;height:49px;background:#d4d4e2"></div>
<div class="ab" style="left:1092px;top:376px;width:1px;height:49px;background:#d4d4e2"></div>
<div class="ab" style="left:1250px;top:376px;width:1px;height:49px;background:#d4d4e2"></div>
<div class="ab" style="left:1355px;top:376px;width:1px;height:49px;background:#d4d4e2"></div>
<div class="ab" style="left:1486px;top:376px;width:1px;height:49px;background:#d4d4e2"></div>
<div class="ab" style="left:1605px;top:376px;width:1px;height:49px;background:#d4d4e2"></div>
<div class="ab" style="left:1763px;top:376px;width:1px;height:49px;background:#d4d4e2"></div>
<div class="ab" style="left:2058px;top:376px;width:1px;height:49px;background:#d4d4e2"></div>
<svg class="ab" style="left:1298px;top:379px" width="11" height="8"><path d="M0 7.5 h11 v-2 h-2 l-3.5 -5 l-3.5 5 h-2z" fill="#000"/></svg>
<div class="t" style="left:442.90px;top:392.03px;font-size:16.5px;color:#111;font-weight:bold;letter-spacing:0.412px;">Назначение</div>
<div class="t" style="left:874.00px;top:392.03px;font-size:16.5px;color:#111;font-weight:bold;letter-spacing:0.263px;">К врачу</div>
<div class="t" style="left:1032.30px;top:392.03px;font-size:16.5px;color:#111;font-weight:bold;letter-spacing:-0.693px;">Cito?</div>
<div class="t" style="left:1097.50px;top:392.03px;font-size:16.5px;color:#111;font-weight:bold;letter-spacing:0.464px;">Назначил</div>
<div class="t" style="left:1255.90px;top:392.03px;font-size:16.5px;color:#111;font-weight:bold;letter-spacing:-0.137px;">Дата</div>
<div class="t" style="left:1491.70px;top:392.03px;font-size:16.5px;color:#111;font-weight:bold;letter-spacing:0.734px;">Цена</div>
<div class="t" style="left:1610.10px;top:392.03px;font-size:16.5px;color:#111;font-weight:bold;letter-spacing:0.691px;">Инициатор</div>
<div class="t" style="left:1361.60px;top:381.33px;font-size:16.5px;color:#111;font-weight:bold;letter-spacing:-0.180px;">Способ</div>
<div class="t" style="left:1361.60px;top:401.73px;font-size:16.5px;color:#111;font-weight:bold;letter-spacing:0.123px;">оплаты</div>
<div class="t" style="left:1768.40px;top:381.03px;font-size:16.5px;color:#111;font-weight:bold;letter-spacing:0.248px;">Комментарий (цель исследования</div>
<div class="t" style="left:1768.40px;top:401.63px;font-size:16.5px;color:#111;font-weight:bold;letter-spacing:0.293px;">консультации)</div>
<div class="ab" style="left:353px;top:425px;width:1706px;height:30px;background:#f4f4f4"></div>
<div class="ab" style="left:353px;top:425px;width:29px;height:227px;background:#f4f4f4"></div>
<div class="t" style="left:383.20px;top:432.03px;font-size:16.5px;color:#111;font-weight:bold;letter-spacing:0.257px;">Консультации</div>
<div class="ab" style="left:353px;top:580px;width:1706px;height:30px;background:#f4f4f4"></div>
<div class="t" style="left:383.50px;top:587.03px;font-size:16.5px;color:#111;font-weight:bold;letter-spacing:0.120px;">Инструментальные исследования</div>
<svg class="ab" style="left:365px;top:437px" width="8" height="6"><path d="M0 5.5 l4 -5 l4 5z" fill="#777"/></svg>
<svg class="ab" style="left:365px;top:592px" width="8" height="6"><path d="M0 5.5 l4 -5 l4 5z" fill="#777"/></svg>
<div class="ab" style="left:382px;top:455px;width:1677px;height:42px;background:#fff;border-top:1px solid #d4d4e2;border-bottom:1px solid #d4d4e2"></div>
<div class="ab" style="left:382px;top:455px;width:1px;height:42px;background:#d4d4e2"></div>
<div class="ab" style="left:437px;top:455px;width:1px;height:42px;background:#d4d4e2"></div>
<div class="ab" style="left:868px;top:455px;width:1px;height:42px;background:#d4d4e2"></div>
<div class="ab" style="left:1026px;top:455px;width:1px;height:42px;background:#d4d4e2"></div>
<div class="ab" style="left:1092px;top:455px;width:1px;height:42px;background:#d4d4e2"></div>
<div class="ab" style="left:1250px;top:455px;width:1px;height:42px;background:#d4d4e2"></div>
<div class="ab" style="left:1355px;top:455px;width:1px;height:42px;background:#d4d4e2"></div>
<div class="ab" style="left:1486px;top:455px;width:1px;height:42px;background:#d4d4e2"></div>
<div class="ab" style="left:1605px;top:455px;width:1px;height:42px;background:#d4d4e2"></div>
<div class="ab" style="left:1763px;top:455px;width:1px;height:42px;background:#d4d4e2"></div>
<div class="ab" style="left:2058px;top:455px;width:1px;height:42px;background:#d4d4e2"></div>
<div class="t" style="left:450.00px;top:467.53px;font-size:16.5px;color:#111;letter-spacing:0.322px;">Первичный осмотр лечащего врача</div>
<div class="ab" style="left:450px;top:476px;width:285px;height:2px;background:linear-gradient(#111 0 1px,rgba(0,0,0,.45) 1px)"></div>
<svg class="ab" style="left:845px;top:469px" width="17" height="15" viewBox="0 0 17 15"><path d="M3 0.8 h10 q2.5 0 2.5 2.5 v5 q0 2 -2 2.3 l-5.5 3 l1 -2.5 h-6 q-2.3 0 -2.3 -2.3 v-5.5 q0 -2.5 2.3 -2.5z" fill="#e2ecf9" stroke="#6b9bd2" stroke-width="1.4" stroke-linejoin="round"/></svg>
<div class="t" style="left:874.30px;top:467.53px;font-size:16.5px;color:#111;">Лебедева О.Н.</div>
<div class="ab" style="left:1042px;top:464px;width:31px;height:26px;background:#f3f3f3;border:1px solid #d6d6d6"></div>
<div class="t" style="left:1044.00px;top:467.53px;font-size:16.5px;color:#7a7a7a;letter-spacing:-0.120px;">нет</div>
<div class="t" style="left:1098.40px;top:467.53px;font-size:16.5px;color:#111;">Лебедева О.Н.</div>
<div class="t" style="left:1256.40px;top:467.53px;font-size:16.5px;color:#111;letter-spacing:-0.300px;">13.03.2023</div>
<div class="t" style="left:1380.00px;top:457.73px;font-size:16.5px;color:#111;letter-spacing:-0.020px;">Оплата из</div>
<div class="t" style="left:1379.00px;top:478.03px;font-size:16.5px;color:#111;letter-spacing:0.707px;">программы</div>
<div class="t" style="left:1536.90px;top:467.53px;font-size:16.5px;color:#111;letter-spacing:-0.164px;">800,00 ₽</div>
<div class="t" style="left:1611.00px;top:467.53px;font-size:16.5px;color:#111;">Лебедева О.Н.</div>
<div class="ab" style="left:382px;top:496px;width:1677px;height:42px;background:#fff;border-top:1px solid #d4d4e2;border-bottom:1px solid #d4d4e2"></div>
<div class="ab" style="left:382px;top:496px;width:1px;height:42px;background:#d4d4e2"></div>
<div class="ab" style="left:437px;top:496px;width:1px;height:42px;background:#d4d4e2"></div>
<div class="ab" style="left:868px;top:496px;width:1px;height:42px;background:#d4d4e2"></div>
<div class="ab" style="left:1026px;top:496px;width:1px;height:42px;background:#d4d4e2"></div>
<div class="ab" style="left:1092px;top:496px;width:1px;height:42px;background:#d4d4e2"></div>
<div class="ab" style="left:1250px;top:496px;width:1px;height:42px;background:#d4d4e2"></div>
<div class="ab" style="left:1355px;top:496px;width:1px;height:42px;background:#d4d4e2"></div>
<div class="ab" style="left:1486px;top:496px;width:1px;height:42px;background:#d4d4e2"></div>
<div class="ab" style="left:1605px;top:496px;width:1px;height:42px;background:#d4d4e2"></div>
<div class="ab" style="left:1763px;top:496px;width:1px;height:42px;background:#d4d4e2"></div>
<div class="ab" style="left:2058px;top:496px;width:1px;height:42px;background:#d4d4e2"></div>
<div class="t" style="left:450.00px;top:508.53px;font-size:16.5px;color:#111;letter-spacing:0.322px;">Первичный осмотр лечащего врача</div>
<div class="ab" style="left:450px;top:517px;width:285px;height:2px;background:linear-gradient(#111 0 1px,rgba(0,0,0,.45) 1px)"></div>
<svg class="ab" style="left:845px;top:510px" width="17" height="15" viewBox="0 0 17 15"><path d="M3 0.8 h10 q2.5 0 2.5 2.5 v5 q0 2 -2 2.3 l-5.5 3 l1 -2.5 h-6 q-2.3 0 -2.3 -2.3 v-5.5 q0 -2.5 2.3 -2.5z" fill="#e2ecf9" stroke="#6b9bd2" stroke-width="1.4" stroke-linejoin="round"/></svg>
<div class="t" style="left:873.30px;top:508.53px;font-size:16.5px;color:#111;">Иванова А.С.</div>
<div class="ab" style="left:1042px;top:505px;width:31px;height:26px;background:#f3f3f3;border:1px solid #d6d6d6"></div>
<div class="t" style="left:1044.00px;top:508.53px;font-size:16.5px;color:#7a7a7a;letter-spacing:-0.120px;">нет</div>
<div class="t" style="left:1097.40px;top:508.53px;font-size:16.5px;color:#111;">Иванова А.С.</div>
<div class="t" style="left:1256.40px;top:508.53px;font-size:16.5px;color:#111;letter-spacing:-0.300px;">13.03.2023</div>
<div class="t" style="left:1380.00px;top:498.73px;font-size:16.5px;color:#111;letter-spacing:-0.020px;">Оплата из</div>
<div class="t" style="left:1379.00px;top:519.03px;font-size:16.5px;color:#111;letter-spacing:0.707px;">программы</div>
<div class="t" style="left:1536.90px;top:508.53px;font-size:16.5px;color:#111;letter-spacing:-0.164px;">800,00 ₽</div>
<div class="t" style="left:1610.00px;top:508.53px;font-size:16.5px;color:#111;">Иванова А.С.</div>
<div class="ab" style="left:382px;top:537px;width:1677px;height:43px;background:#fff;border-top:1px solid #d4d4e2;border-bottom:1px solid #d4d4e2"></div>
<div class="ab" style="left:382px;top:537px;width:1px;height:43px;background:#d4d4e2"></div>
<div class="ab" style="left:437px;top:537px;width:1px;height:43px;background:#d4d4e2"></div>
<div class="ab" style="left:868px;top:537px;width:1px;height:43px;background:#d4d4e2"></div>
<div class="ab" style="left:1026px;top:537px;width:1px;height:43px;background:#d4d4e2"></div>
<div class="ab" style="left:1092px;top:537px;width:1px;height:43px;background:#d4d4e2"></div>
<div class="ab" style="left:1250px;top:537px;width:1px;height:43px;background:#d4d4e2"></div>
<div class="ab" style="left:1355px;top:537px;width:1px;height:43px;background:#d4d4e2"></div>
<div class="ab" style="left:1486px;top:537px;width:1px;height:43px;background:#d4d4e2"></div>
<div class="ab" style="left:1605px;top:537px;width:1px;height:43px;background:#d4d4e2"></div>
<div class="ab" style="left:1763px;top:537px;width:1px;height:43px;background:#d4d4e2"></div>
<div class="ab" style="left:2058px;top:537px;width:1px;height:43px;background:#d4d4e2"></div>
<div class="t" style="left:477.60px;top:549.53px;font-size:16.5px;color:#111;letter-spacing:0.352px;">Первичный осмотр лечащего врача</div>
<svg class="ab" style="left:845px;top:551px" width="17" height="15" viewBox="0 0 17 15"><path d="M3 0.8 h10 q2.5 0 2.5 2.5 v5 q0 2 -2 2.3 l-5.5 3 l1 -2.5 h-6 q-2.3 0 -2.3 -2.3 v-5.5 q0 -2.5 2.3 -2.5z" fill="#e2ecf9" stroke="#6b9bd2" stroke-width="1.4" stroke-linejoin="round"/></svg>
<div class="t" style="left:873.30px;top:549.53px;font-size:16.5px;color:#111;">Иванова А.С.</div>
<div class="ab" style="left:1042px;top:546px;width:31px;height:26px;background:#f3f3f3;border:1px solid #d6d6d6"></div>
<div class="t" style="left:1044.00px;top:549.53px;font-size:16.5px;color:#7a7a7a;letter-spacing:-0.120px;">нет</div>
<div class="t" style="left:1097.40px;top:549.53px;font-size:16.5px;color:#111;">Иванова А.С.</div>
<div class="t" style="left:1256.40px;top:549.53px;font-size:16.5px;color:#111;letter-spacing:-0.300px;">13.03.2023</div>
<div class="t" style="left:1380.00px;top:539.73px;font-size:16.5px;color:#111;letter-spacing:-0.020px;">Оплата из</div>
<div class="t" style="left:1379.00px;top:560.03px;font-size:16.5px;color:#111;letter-spacing:0.707px;">программы</div>
<div class="t" style="left:1536.90px;top:549.53px;font-size:16.5px;color:#111;letter-spacing:-0.164px;">800,00 ₽</div>
<div class="t" style="left:1610.00px;top:549.53px;font-size:16.5px;color:#111;">Иванова А.С.</div>
<div class="ab" style="left:382px;top:610px;width:1677px;height:42px;background:#fff;border-top:1px solid #d4d4e2;border-bottom:1px solid #d4d4e2"></div>
<div class="ab" style="left:382px;top:610px;width:1px;height:42px;background:#d4d4e2"></div>
<div class="ab" style="left:437px;top:610px;width:1px;height:42px;background:#d4d4e2"></div>
<div class="ab" style="left:868px;top:610px;width:1px;height:42px;background:#d4d4e2"></div>
<div class="ab" style="left:1026px;top:610px;width:1px;height:42px;background:#d4d4e2"></div>
<div class="ab" style="left:1092px;top:610px;width:1px;height:42px;background:#d4d4e2"></div>
<div class="ab" style="left:1250px;top:610px;width:1px;height:42px;background:#d4d4e2"></div>
<div class="ab" style="left:1355px;top:610px;width:1px;height:42px;background:#d4d4e2"></div>
<div class="ab" style="left:1486px;top:610px;width:1px;height:42px;background:#d4d4e2"></div>
<div class="ab" style="left:1605px;top:610px;width:1px;height:42px;background:#d4d4e2"></div>
<div class="ab" style="left:1763px;top:610px;width:1px;height:42px;background:#d4d4e2"></div>
<div class="ab" style="left:2058px;top:610px;width:1px;height:42px;background:#d4d4e2"></div>
<div class="t" style="left:451.00px;top:622.53px;font-size:16.5px;color:#111;letter-spacing:-1.485px;">ЭКГ</div>
<div class="ab" style="left:450px;top:631px;width:30px;height:2px;background:linear-gradient(#111 0 1px,rgba(0,0,0,.45) 1px)"></div>
<svg class="ab" style="left:845px;top:624px" width="17" height="15" viewBox="0 0 17 15"><path d="M3 0.8 h10 q2.5 0 2.5 2.5 v5 q0 2 -2 2.3 l-5.5 3 l1 -2.5 h-6 q-2.3 0 -2.3 -2.3 v-5.5 q0 -2.5 2.3 -2.5z" fill="#e2ecf9" stroke="#6b9bd2" stroke-width="1.4" stroke-linejoin="round"/></svg>
<div class="ab" style="left:1042px;top:619px;width:31px;height:26px;background:#f3f3f3;border:1px solid #d6d6d6"></div>
<div class="t" style="left:1044.00px;top:622.53px;font-size:16.5px;color:#7a7a7a;letter-spacing:-0.120px;">нет</div>
<div class="t" style="left:1098.40px;top:622.53px;font-size:16.5px;color:#111;">Лебедева О.Н.</div>
<div class="t" style="left:1256.40px;top:622.53px;font-size:16.5px;color:#111;letter-spacing:-0.300px;">13.03.2023</div>
<div class="t" style="left:1380.00px;top:612.73px;font-size:16.5px;color:#111;letter-spacing:-0.020px;">Оплата из</div>
<div class="t" style="left:1379.00px;top:633.03px;font-size:16.5px;color:#111;letter-spacing:0.707px;">программы</div>
<div class="t" style="left:1523.80px;top:622.53px;font-size:16.5px;color:#111;letter-spacing:-0.201px;">1 200,00 ₽</div>
<div class="t" style="left:1611.00px;top:622.53px;font-size:16.5px;color:#111;">Лебедева О.Н.</div>
<svg class="ab" style="left:397px;top:554px" width="26" height="10" viewBox="0 0 26 10"><defs><linearGradient id="gb" x1="0" x2="0" y1="0" y2="1"><stop offset="0" stop-color="#00880c"/><stop offset="1" stop-color="#00d42a"/></linearGradient></defs><rect x="0" y="0" width="6" height="10" fill="url(#gb)"/><rect x="7" y="0" width="5" height="10" fill="url(#gb)"/><rect x="14" y="0" width="5" height="10" fill="url(#gb)"/><rect x="20" y="0" width="5" height="10" fill="#d8d8d8"/></svg>
<svg class="ab" style="left:443px;top:549px" width="21" height="20" viewBox="0 0 21 20"><rect x="0" y="0" width="20" height="19" rx="2.5" fill="#fcc824"/><rect x="1" y="10" width="19" height="9" rx="2" fill="#fdd84a" opacity="0.6"/><path d="M6 12 l7 -7 l3 3 l-7 7z" fill="#f8dc50" stroke="#9a7410" stroke-width="0.7"/><path d="M13 5 l1.5 -1.5 l3 3 l-1.5 1.5z" fill="#a8a8b0"/><path d="M14.5 3.5 l1 -1 l3 3 l-1 1z" fill="#e05050"/><path d="M6 12 l3 3 l-4.5 1.5z" fill="#f2a894"/><path d="M4.5 16.5 l0.8 -2.2 l1.4 1.4z" fill="#222"/></svg>
<div class="ab" style="left:384px;top:538px;width:1223px;height:44px;border:3px solid #e03a3a;border-radius:6px"></div>
<div class="ab" style="left:353px;top:652px;width:1706px;height:19px;background:#f4f4f4"></div>
<div class="ab" style="left:353px;top:376px;width:1px;height:295px;background:#d4d4e2"></div>
<div class="ab" style="left:2058px;top:376px;width:1px;height:295px;background:#d4d4e2"></div>
<div class="ab" style="left:353px;top:579px;width:1706px;height:1px;background:#d4d4e2"></div>
<div class="ab" style="left:376px;top:657px;width:1571px;height:12px;background:#c9cbd8"></div>
<svg class="ab" style="left:361px;top:657px" width="8" height="12"><path d="M7.5 0 v11 l-7 -5.5z" fill="#666"/></svg>
<svg class="ab" style="left:2043px;top:657px" width="8" height="13"><path d="M0.5 0 v12 l7 -6z" fill="#6e6e6e"/></svg>
<div class="ab" style="left:2071px;top:157px;width:7px;height:514px;background:#41474f"></div>
<div class="ab" style="left:2078px;top:209px;width:16px;height:462px;background:#cbcbcb"></div>
<div class="ab" style="left:1726px;top:159px;width:365px;height:135px;background:#f0f1f6;border:1px solid #7a7a7a"></div>
<div class="t" style="left:1735.00px;top:166.88px;font-size:15.5px;color:#454545;letter-spacing:0.370px;">Сумма на лечение по программе:</div>
<div class="t" style="left:1999.00px;top:166.88px;font-size:15.5px;color:#454545;letter-spacing:0.074px;">19 000,00 ₽</div>
<div class="t" style="left:1849.70px;top:198.88px;font-size:15.5px;color:#454545;letter-spacing:0.478px;">Из них назначено:</div>
<div class="t" style="left:2009.00px;top:198.88px;font-size:15.5px;color:#454545;letter-spacing:-0.071px;">3 800,00 ₽</div>
<div class="t" style="left:1842.00px;top:217.48px;font-size:15.5px;color:#454545;letter-spacing:0.507px;">Диспетчеризовано:</div>
<div class="ab" style="left:2005px;top:219px;width:81px;height:12px;background:#f9e39b;border-radius:6px"></div>
<div class="t" style="left:2009.00px;top:217.48px;font-size:15.5px;color:#807550;letter-spacing:-0.071px;">2 000,00 ₽</div>
<div class="t" style="left:1907.40px;top:237.58px;font-size:15.5px;color:#454545;letter-spacing:0.365px;">Отпущено:</div>
<div class="ab" style="left:2005px;top:240px;width:81px;height:12px;background:#f9e39b;border-radius:6px"></div>
<div class="t" style="left:2009.00px;top:237.58px;font-size:15.5px;color:#807550;letter-spacing:-0.071px;">2 800,00 ₽</div>
<div class="t" style="left:1786.60px;top:269.88px;font-size:15.5px;color:#454545;letter-spacing:0.325px;">Нераспределенный лимит:</div>
<div class="t" style="left:1999.00px;top:269.88px;font-size:15.5px;color:#454545;letter-spacing:0.074px;">15 200,00 ₽</div>
</body></html>
